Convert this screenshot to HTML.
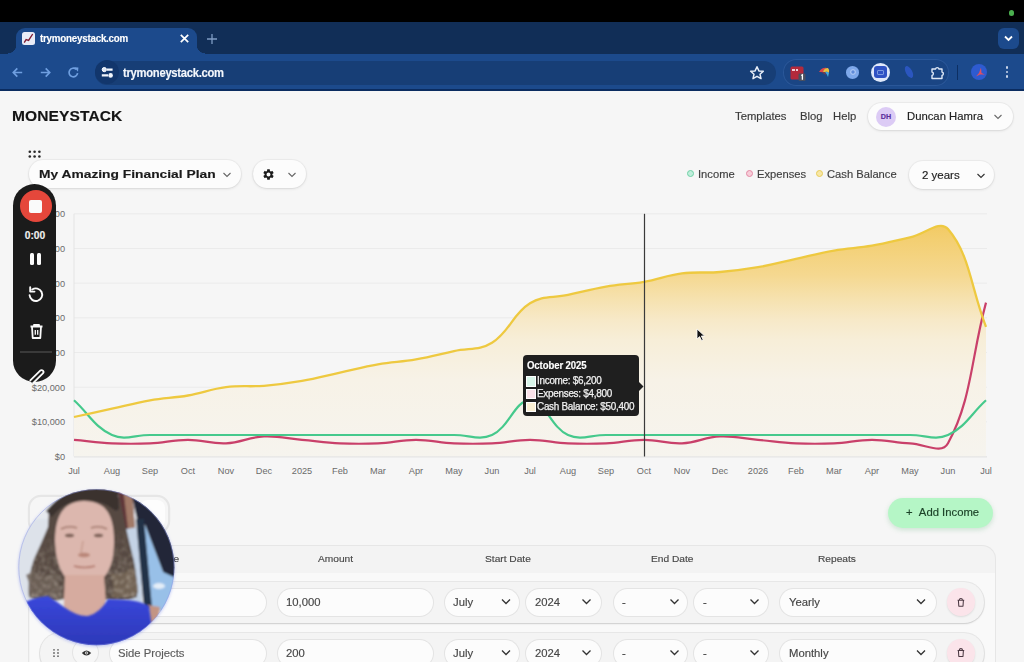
<!DOCTYPE html>
<html><head><meta charset="utf-8">
<style>
*{margin:0;padding:0;box-sizing:border-box}
html,body{width:1024px;height:662px;overflow:hidden;background:#000;font-family:"Liberation Sans",sans-serif}
.a{position:absolute}
.t{position:absolute;white-space:nowrap;line-height:1;-webkit-text-stroke:0.15px currentColor}
.pill{position:absolute;background:#fcfcfc;border-radius:15px;box-shadow:0 1px 3px rgba(0,0,0,.10),0 0 0 1px rgba(0,0,0,.035)}
</style></head><body>
<!-- browser chrome -->
<div class="a" style="left:0;top:22px;width:1024px;height:32px;background:#112e57"></div>
<div class="a" style="left:1011.7px;top:13px;width:0;height:0"></div>
<div class="a" style="left:1009px;top:10.3px;width:5.4px;height:5.4px;border-radius:50%;background:#4bb04f"></div>
<!-- active tab -->
<div class="a" style="left:16px;top:28px;width:181px;height:26px;background:#1c4a8c;border-radius:9px 9px 0 0"></div>
<div class="a" style="left:8px;top:45px;width:8px;height:9px;background:radial-gradient(circle at 0 0,#112e57 8px,#1c4a8c 8.5px)"></div>
<div class="a" style="left:197px;top:45px;width:8px;height:9px;background:radial-gradient(circle at 100% 0,#112e57 8px,#1c4a8c 8.5px)"></div>
<div class="a" style="left:22px;top:32px;width:12.7px;height:13px;border-radius:2.5px;background:#e9ecf7"></div>
<svg class="a" style="left:22px;top:32px" width="13" height="13"><polyline points="2.2,10.6 4.1,7.6 6.6,8.4 10.7,2" fill="none" stroke="#7e1a32" stroke-width="1.35"/></svg>
<div class="t" style="left:40.3px;top:33px;font-size:11.2px;font-weight:bold;color:#fff;letter-spacing:-0.25px;transform:scaleX(0.873);transform-origin:0 0">trymoneystack.com</div>
<svg class="a" style="left:179px;top:33px" width="11" height="11"><path d="M1.8 1.8L9.2 9.2M9.2 1.8L1.8 9.2" stroke="#fff" stroke-width="1.7"/></svg>
<svg class="a" style="left:206px;top:32.5px" width="12" height="12"><path d="M6 1V11M1 6H11" stroke="#7f9cc4" stroke-width="1.3"/></svg>
<div class="a" style="left:998px;top:28px;width:21px;height:21px;border-radius:6px;background:#1c4a8c"></div>
<svg class="a" style="left:1003px;top:34px" width="11" height="9"><path d="M2 2.5L5.5 6L9 2.5" fill="none" stroke="#fff" stroke-width="1.8"/></svg>
<!-- toolbar -->
<div class="a" style="left:0;top:54px;width:1024px;height:35px;background:#1c4a8c"></div>
<div class="a" style="left:0;top:89px;width:1024px;height:1.5px;background:#0b2c60"></div>
<svg class="a" style="left:11.1px;top:65.5px" width="13" height="13"><path d="M11.2 6.5H2.3M6.3 2.4L2.3 6.5L6.3 10.6" fill="none" stroke="#6f9fe0" stroke-width="1.7"/></svg>
<svg class="a" style="left:38.7px;top:65.5px" width="13" height="13"><path d="M1.8 6.5H10.7M6.7 2.4L10.7 6.5L6.7 10.6" fill="none" stroke="#6f9fe0" stroke-width="1.7"/></svg>
<svg class="a" style="left:67.3px;top:65.5px" width="13" height="13"><path d="M10.6 7.2A4.3 4.3 0 1 1 9.2 3.3" fill="none" stroke="#6f9fe0" stroke-width="1.7"/><path d="M7.2 1.2L11.4 1.6L11 5.8Z" fill="#6f9fe0"/></svg>
<div class="a" style="left:95px;top:60.5px;width:681px;height:24px;border-radius:12px;background:#173e76"></div>
<div class="a" style="left:94.6px;top:60.4px;width:24px;height:24px;border-radius:50%;background:#12366c"></div>
<svg class="a" style="left:99.5px;top:65px" width="15" height="15"><circle cx="4.3" cy="4.6" r="2.1" fill="#dfe8f6" stroke="#fff" stroke-width="1"/><path d="M6.8 4.6H12.6M1.8 10.4H8" stroke="#f2f6fc" stroke-width="2.1"/><circle cx="10.6" cy="10.4" r="2.3" fill="#f2f6fc"/></svg>
<div class="t" style="left:123px;top:66.5px;font-size:12.4px;font-weight:bold;color:#f4f7fc;letter-spacing:-0.3px;transform:scaleX(0.906);transform-origin:0 0">trymoneystack.com</div>
<svg class="a" style="left:749px;top:64.5px" width="16" height="16"><path d="M8 1.8L9.9 5.9L14.3 6.3L11 9.2L12 13.6L8 11.3L4 13.6L5 9.2L1.7 6.3L6.1 5.9Z" fill="none" stroke="#e8eef8" stroke-width="1.5" stroke-linejoin="round"/></svg>
<div class="a" style="left:783px;top:59.4px;width:166.4px;height:26.3px;border-radius:13px;background:#1a4584;box-shadow:inset 0 0 0 1px #2a5799"></div>
<svg class="a" style="left:789px;top:65px" width="18" height="17"><rect x="1.5" y="1.5" width="13" height="13" rx="1.5" fill="#b32a3c"/><rect x="3" y="4" width="3" height="2" fill="#f0d0d8"/><rect x="7" y="4" width="2" height="2" fill="#f0d0d8"/><rect x="9.5" y="8.5" width="7" height="7.5" rx="1.2" fill="#4a5060"/><path d="M12.2 10.5L13.4 9.8V14.8" stroke="#fff" stroke-width="1.3" fill="none"/></svg>
<svg class="a" style="left:818px;top:66px" width="14" height="12"><path d="M1 6Q4 1 9 2Q6 3 5 6Z" fill="#e04848"/><path d="M5 6Q6 2 10 2Q12 4 11 7Q9 5 7 6Z" fill="#e8c040"/><path d="M7 6Q9 5 11 7L10 11Q9 8 7 6Z" fill="#40a8e0"/><path d="M3 6L7 6L8 9Z" fill="#a03838" opacity="0.7"/></svg>
<div class="a" style="left:846px;top:66px;width:13px;height:12.5px;border-radius:50%;background:#7ea8ea"></div>
<div class="a" style="left:849.5px;top:69.3px;width:6px;height:6px;border-radius:50%;background:#5f8ad8;box-shadow:inset 0 0 0 1.3px #a8c4f2"></div>
<div class="a" style="left:870.8px;top:62.6px;width:19.4px;height:19.4px;border-radius:50%;background:#dfe8fa"></div>
<div class="a" style="left:874.3px;top:66.1px;width:12.4px;height:12.4px;border-radius:3px;background:#2f52c4"></div>
<div class="a" style="left:877px;top:69.8px;width:7px;height:5px;border-radius:1px;border:1px solid #7a98e0"></div>
<svg class="a" style="left:902px;top:64px" width="14" height="16"><ellipse cx="7" cy="8" rx="3.2" ry="6.5" transform="rotate(-28 7 8)" fill="#2b56bf"/></svg>
<svg class="a" style="left:929px;top:64.5px" width="16" height="16"><path d="M3 4H6.5A1.8 1.8 0 0 1 10 4H13V7A1.8 1.8 0 0 1 13 10.5V13.5H3V10.5A1.8 1.8 0 0 0 3 7Z" fill="none" stroke="#dfe8f6" stroke-width="1.4" stroke-linejoin="round"/></svg>
<div class="a" style="left:957px;top:65px;width:1.3px;height:15px;background:#0d2f63"></div>
<div class="a" style="left:971px;top:64.3px;width:16px;height:16px;border-radius:50%;background:#2e5bd0"></div>
<svg class="a" style="left:971px;top:64.3px" width="16" height="16"><path d="M10 3.5L10.5 9L14 10.5L9 10.5L5 12.5L8 9Z" fill="#e05060"/></svg>
<div class="a" style="left:1005.7px;top:66.3px;width:2.6px;height:2.6px;border-radius:50%;background:#c9d6ea"></div>
<div class="a" style="left:1005.7px;top:70.7px;width:2.6px;height:2.6px;border-radius:50%;background:#c9d6ea"></div>
<div class="a" style="left:1005.7px;top:75.1px;width:2.6px;height:2.6px;border-radius:50%;background:#c9d6ea"></div>

<!-- page -->
<div class="a" style="left:0;top:90.5px;width:1024px;height:572px;background:#f6f6f6;overflow:hidden">
</div>
<div class="t" style="left:11.6px;top:108.3px;font-size:15.2px;font-weight:bold;color:#141414;letter-spacing:0.1px;transform:scaleX(1.023);transform-origin:0 0">MONEYSTACK</div>
<div class="t" style="left:735.4px;top:111.56px;font-size:10.4px;color:#3a3a3a;transform:scaleX(1.087);transform-origin:0 0">Templates</div>
<div class="t" style="left:799.6px;top:111.56px;font-size:10.4px;color:#3a3a3a;transform:scaleX(1.087);transform-origin:0 0">Blog</div>
<div class="t" style="left:832.8px;top:111.56px;font-size:10.4px;color:#3a3a3a;transform:scaleX(1.087);transform-origin:0 0">Help</div>
<div class="pill" style="left:867.6px;top:102.5px;width:145.7px;height:27.5px;border-radius:14px"></div>
<div class="a" style="left:876px;top:106.5px;width:20px;height:20px;border-radius:50%;background:#dccbf5"></div>
<div class="t" style="left:876px;top:113px;width:20px;text-align:center;font-size:7.2px;font-weight:bold;color:#5a2d9c">DH</div>
<div class="t" style="left:906.5px;top:111.65px;font-size:10.3px;color:#222;transform:scaleX(1.097);transform-origin:0 0">Duncan Hamra</div>
<svg class="a" style="left:993px;top:112.5px" width="10" height="8"><path d="M1.5 2L5 5.5L8.5 2" fill="none" stroke="#6a6a6a" stroke-width="1.1"/></svg>

<svg class="a" style="left:28px;top:150px" width="14" height="9"><g fill="#2a2a2a"><circle cx="1.8" cy="1.8" r="1.3"/><circle cx="6.6" cy="1.8" r="1.3"/><circle cx="11.4" cy="1.8" r="1.3"/><circle cx="1.8" cy="6.5" r="1.3"/><circle cx="6.6" cy="6.5" r="1.3"/><circle cx="11.4" cy="6.5" r="1.3"/></g></svg>
<div class="pill" style="left:29.4px;top:160px;width:211.8px;height:27.5px;border-radius:14px"></div>
<div class="t" style="left:39px;top:168.16px;font-size:11.6px;font-weight:bold;color:#1b1b1b;transform:scaleX(1.190);transform-origin:0 0">My Amazing Financial Plan</div>
<svg class="a" style="left:222px;top:170.5px" width="10" height="8"><path d="M1.5 2L5 5.5L8.5 2" fill="none" stroke="#666" stroke-width="1.1"/></svg>
<div class="pill" style="left:252.9px;top:160px;width:52.8px;height:27.5px;border-radius:14px"></div>
<svg class="a" style="left:262px;top:167.5px" width="13" height="13" viewBox="0 0 24 24"><path fill="#1b1b1b" d="M19.14 12.94c.04-.3.06-.61.06-.94 0-.32-.02-.64-.07-.94l2.03-1.58a.49.49 0 0 0 .12-.61l-1.92-3.32a.488.488 0 0 0-.59-.22l-2.39.96c-.5-.38-1.03-.7-1.62-.94l-.36-2.54a.484.484 0 0 0-.48-.41h-3.84c-.24 0-.43.17-.47.41l-.36 2.54c-.59.24-1.13.57-1.62.94l-2.39-.96c-.22-.08-.47 0-.59.22L2.74 8.87c-.12.21-.08.47.12.61l2.03 1.58c-.05.3-.09.63-.09.94s.02.64.07.94l-2.03 1.58a.49.49 0 0 0-.12.61l1.92 3.32c.12.22.37.29.59.22l2.39-.96c.5.38 1.03.7 1.62.94l.36 2.54c.05.24.24.41.48.41h3.84c.24 0 .44-.17.47-.41l.36-2.54c.59-.24 1.13-.56 1.62-.94l2.39.96c.22.08.47 0 .59-.22l1.92-3.32c.12-.22.07-.47-.12-.61l-2.01-1.58zM12 15.6c-1.98 0-3.6-1.62-3.6-3.6s1.62-3.6 3.6-3.6 3.6 1.62 3.6 3.6-1.62 3.6-3.6 3.6z"/></svg>
<svg class="a" style="left:286.7px;top:170.5px" width="10" height="8"><path d="M1.5 2L5 5.5L8.5 2" fill="none" stroke="#666" stroke-width="1.1"/></svg>

<div class="a" style="left:687px;top:170.2px;width:7px;height:7px;border-radius:50%;background:#bfeedb;border:1.2px solid #6fd0a5"></div>
<div class="t" style="left:698.4px;top:169.95px;font-size:10.2px;color:#3f3f3f;transform:scaleX(1.098);transform-origin:0 0">Income</div>
<div class="a" style="left:745.5px;top:170.2px;width:7px;height:7px;border-radius:50%;background:#f7cdd8;border:1.2px solid #e48aa5"></div>
<div class="t" style="left:756.7px;top:169.95px;font-size:10.2px;color:#3f3f3f;transform:scaleX(1.098);transform-origin:0 0">Expenses</div>
<div class="a" style="left:815.5px;top:170.2px;width:7px;height:7px;border-radius:50%;background:#f8e7a6;border:1.2px solid #e8cc5a"></div>
<div class="t" style="left:826.6px;top:169.95px;font-size:10.2px;color:#3f3f3f;transform:scaleX(1.098);transform-origin:0 0">Cash Balance</div>
<div class="pill" style="left:908.8px;top:161.2px;width:85.4px;height:27.5px;border-radius:14px"></div>
<div class="t" style="left:922.3px;top:171.39px;font-size:10.1px;color:#222;transform:scaleX(1.139);transform-origin:0 0">2 years</div>
<svg class="a" style="left:975.8px;top:171.6px" width="10" height="8"><path d="M1.5 2L5 5.5L8.5 2" fill="none" stroke="#333" stroke-width="1.15"/></svg>

<svg width="1024" height="662" style="position:absolute;left:0;top:0">
<defs><linearGradient id="cg" x1="0" y1="213.8" x2="0" y2="456.5" gradientUnits="userSpaceOnUse"><stop offset="0" stop-color="#f2c658"/><stop offset="0.108" stop-color="#f3cf72"/><stop offset="0.252" stop-color="#f5d890"/><stop offset="0.355" stop-color="#f6e2b0"/><stop offset="0.437" stop-color="#f7e9c8"/><stop offset="0.52" stop-color="#f7eed8"/><stop offset="0.684" stop-color="#f7f2e7"/><stop offset="1" stop-color="#f6f4ee"/></linearGradient></defs>
<line x1="74" x2="987" y1="213.8" y2="213.8" stroke="#ebebeb" stroke-width="1"/>
<line x1="74" x2="987" y1="248.5" y2="248.5" stroke="#ebebeb" stroke-width="1"/>
<line x1="74" x2="987" y1="283.1" y2="283.1" stroke="#ebebeb" stroke-width="1"/>
<line x1="74" x2="987" y1="317.8" y2="317.8" stroke="#ebebeb" stroke-width="1"/>
<line x1="74" x2="987" y1="352.5" y2="352.5" stroke="#ebebeb" stroke-width="1"/>
<line x1="74" x2="987" y1="387.2" y2="387.2" stroke="#ebebeb" stroke-width="1"/>
<line x1="74" x2="987" y1="421.8" y2="421.8" stroke="#ebebeb" stroke-width="1"/>
<line x1="74" x2="987" y1="456.5" y2="456.5" stroke="#ebebeb" stroke-width="1"/>
<line x1="74" x2="74" y1="213.8" y2="456.5" stroke="#e4e4e4" stroke-width="1"/>
<path d="M74.0 417.0 C89.2 413.6 96.8 412.0 112.0 408.7 C127.2 405.3 134.7 403.0 150.0 400.3 C165.1 397.7 172.9 398.1 188.0 395.5 C203.3 392.8 210.6 389.1 226.0 387.2 C241.0 385.2 248.9 387.0 264.0 385.8 C279.3 384.5 286.9 383.5 302.0 380.9 C317.3 378.3 324.8 375.9 340.0 372.6 C355.2 369.3 362.7 366.9 378.0 364.3 C393.1 361.7 400.9 362.0 416.0 359.4 C431.3 356.8 438.8 354.4 454.0 351.1 C469.2 347.8 479.4 350.7 492.0 342.8 C509.8 331.6 512.2 314.4 530.0 303.3 C542.6 295.3 552.8 298.3 568.0 294.9 C583.2 291.6 590.7 289.3 606.0 286.6 C621.1 284.0 628.9 284.4 644.0 281.8 C659.3 279.1 666.6 275.4 682.0 273.4 C697.0 271.5 704.9 273.3 720.0 272.0 C735.3 270.8 742.9 269.8 758.0 267.2 C773.3 264.5 780.8 262.2 796.0 258.9 C811.2 255.5 818.7 253.2 834.0 250.6 C849.1 247.9 856.9 248.3 872.0 245.7 C887.3 243.0 894.8 240.7 910.0 237.4 C925.2 234.0 939.8 219.4 948.0 229.1 C970.2 255.2 970.8 287.7 986.0 326.8 L986 456.5 L74 456.5 Z" fill="url(#cg)"/>
<path d="M74.0 439.9 C89.2 441.2 96.8 442.6 112.0 443.3 C127.2 444.0 134.8 444.0 150.0 443.3 C165.2 442.6 172.8 439.9 188.0 439.9 C203.2 439.9 210.9 444.0 226.0 443.3 C241.3 442.6 248.7 437.1 264.0 436.4 C279.1 435.7 286.8 438.5 302.0 439.9 C317.2 441.2 324.8 442.6 340.0 443.3 C355.2 444.0 362.8 444.0 378.0 443.3 C393.2 442.6 400.8 439.9 416.0 439.9 C431.2 439.9 438.8 442.6 454.0 443.3 C469.2 444.0 476.8 444.0 492.0 443.3 C507.2 442.6 514.8 439.9 530.0 439.9 C545.2 439.9 552.8 442.6 568.0 443.3 C583.2 444.0 590.8 444.0 606.0 443.3 C621.2 442.6 628.8 439.9 644.0 439.9 C659.2 439.9 666.9 444.0 682.0 443.3 C697.3 442.6 704.7 437.1 720.0 436.4 C735.1 435.7 742.8 438.5 758.0 439.9 C773.2 441.2 780.8 442.6 796.0 443.3 C811.2 444.0 818.8 444.0 834.0 443.3 C849.2 442.6 856.8 439.9 872.0 439.9 C887.2 439.9 894.8 442.6 910.0 443.3 C925.2 444.0 941.7 455.0 948.0 443.3 C972.1 398.7 970.8 358.9 986.0 302.6" fill="none" stroke="#c9406a" stroke-width="2.2"/>
<path d="M74.0 400.3 C89.2 414.2 94.5 427.0 112.0 435.0 C124.9 440.9 134.8 435.0 150.0 435.0 C165.2 435.0 172.8 435.0 188.0 435.0 C203.2 435.0 210.8 435.0 226.0 435.0 C241.2 435.0 248.8 435.0 264.0 435.0 C279.2 435.0 286.8 435.0 302.0 435.0 C317.2 435.0 324.8 435.0 340.0 435.0 C355.2 435.0 362.8 435.0 378.0 435.0 C393.2 435.0 400.8 435.0 416.0 435.0 C431.2 435.0 438.8 435.0 454.0 435.0 C469.2 435.0 479.1 440.9 492.0 435.0 C509.5 427.0 514.8 400.3 530.0 400.3 C545.2 400.3 550.5 427.0 568.0 435.0 C580.9 440.9 590.8 435.0 606.0 435.0 C621.2 435.0 628.8 435.0 644.0 435.0 C659.2 435.0 666.8 435.0 682.0 435.0 C697.2 435.0 704.8 435.0 720.0 435.0 C735.2 435.0 742.8 435.0 758.0 435.0 C773.2 435.0 780.8 435.0 796.0 435.0 C811.2 435.0 818.8 435.0 834.0 435.0 C849.2 435.0 856.8 435.0 872.0 435.0 C887.2 435.0 894.8 435.0 910.0 435.0 C925.2 435.0 935.1 440.9 948.0 435.0 C965.5 427.0 970.8 414.2 986.0 400.3" fill="none" stroke="#45c98c" stroke-width="2.2"/>
<path d="M74.0 417.0 C89.2 413.6 96.8 412.0 112.0 408.7 C127.2 405.3 134.7 403.0 150.0 400.3 C165.1 397.7 172.9 398.1 188.0 395.5 C203.3 392.8 210.6 389.1 226.0 387.2 C241.0 385.2 248.9 387.0 264.0 385.8 C279.3 384.5 286.9 383.5 302.0 380.9 C317.3 378.3 324.8 375.9 340.0 372.6 C355.2 369.3 362.7 366.9 378.0 364.3 C393.1 361.7 400.9 362.0 416.0 359.4 C431.3 356.8 438.8 354.4 454.0 351.1 C469.2 347.8 479.4 350.7 492.0 342.8 C509.8 331.6 512.2 314.4 530.0 303.3 C542.6 295.3 552.8 298.3 568.0 294.9 C583.2 291.6 590.7 289.3 606.0 286.6 C621.1 284.0 628.9 284.4 644.0 281.8 C659.3 279.1 666.6 275.4 682.0 273.4 C697.0 271.5 704.9 273.3 720.0 272.0 C735.3 270.8 742.9 269.8 758.0 267.2 C773.3 264.5 780.8 262.2 796.0 258.9 C811.2 255.5 818.7 253.2 834.0 250.6 C849.1 247.9 856.9 248.3 872.0 245.7 C887.3 243.0 894.8 240.7 910.0 237.4 C925.2 234.0 939.8 219.4 948.0 229.1 C970.2 255.2 970.8 287.7 986.0 326.8" fill="none" stroke="#eec940" stroke-width="2.3"/>
<line x1="74" x2="987" y1="457" y2="457" stroke="#e3e3e3" stroke-width="1"/>
<line x1="644.5" x2="644.5" y1="213.8" y2="456.5" stroke="#3a3a3a" stroke-width="1.2"/>
<text x="65" y="217.2" text-anchor="end" font-size="9.2" fill="#6b6b6b" font-family="Liberation Sans, sans-serif">$70,000</text>
<text x="65" y="251.9" text-anchor="end" font-size="9.2" fill="#6b6b6b" font-family="Liberation Sans, sans-serif">$60,000</text>
<text x="65" y="286.5" text-anchor="end" font-size="9.2" fill="#6b6b6b" font-family="Liberation Sans, sans-serif">$50,000</text>
<text x="65" y="321.2" text-anchor="end" font-size="9.2" fill="#6b6b6b" font-family="Liberation Sans, sans-serif">$40,000</text>
<text x="65" y="355.9" text-anchor="end" font-size="9.2" fill="#6b6b6b" font-family="Liberation Sans, sans-serif">$30,000</text>
<text x="65" y="390.6" text-anchor="end" font-size="9.2" fill="#6b6b6b" font-family="Liberation Sans, sans-serif">$20,000</text>
<text x="65" y="425.2" text-anchor="end" font-size="9.2" fill="#6b6b6b" font-family="Liberation Sans, sans-serif">$10,000</text>
<text x="65" y="459.9" text-anchor="end" font-size="9.2" fill="#6b6b6b" font-family="Liberation Sans, sans-serif">$0</text>
<text x="74" y="474" text-anchor="middle" font-size="9.2" fill="#6b6b6b" font-family="Liberation Sans, sans-serif">Jul</text>
<text x="112" y="474" text-anchor="middle" font-size="9.2" fill="#6b6b6b" font-family="Liberation Sans, sans-serif">Aug</text>
<text x="150" y="474" text-anchor="middle" font-size="9.2" fill="#6b6b6b" font-family="Liberation Sans, sans-serif">Sep</text>
<text x="188" y="474" text-anchor="middle" font-size="9.2" fill="#6b6b6b" font-family="Liberation Sans, sans-serif">Oct</text>
<text x="226" y="474" text-anchor="middle" font-size="9.2" fill="#6b6b6b" font-family="Liberation Sans, sans-serif">Nov</text>
<text x="264" y="474" text-anchor="middle" font-size="9.2" fill="#6b6b6b" font-family="Liberation Sans, sans-serif">Dec</text>
<text x="302" y="474" text-anchor="middle" font-size="9.2" fill="#6b6b6b" font-family="Liberation Sans, sans-serif">2025</text>
<text x="340" y="474" text-anchor="middle" font-size="9.2" fill="#6b6b6b" font-family="Liberation Sans, sans-serif">Feb</text>
<text x="378" y="474" text-anchor="middle" font-size="9.2" fill="#6b6b6b" font-family="Liberation Sans, sans-serif">Mar</text>
<text x="416" y="474" text-anchor="middle" font-size="9.2" fill="#6b6b6b" font-family="Liberation Sans, sans-serif">Apr</text>
<text x="454" y="474" text-anchor="middle" font-size="9.2" fill="#6b6b6b" font-family="Liberation Sans, sans-serif">May</text>
<text x="492" y="474" text-anchor="middle" font-size="9.2" fill="#6b6b6b" font-family="Liberation Sans, sans-serif">Jun</text>
<text x="530" y="474" text-anchor="middle" font-size="9.2" fill="#6b6b6b" font-family="Liberation Sans, sans-serif">Jul</text>
<text x="568" y="474" text-anchor="middle" font-size="9.2" fill="#6b6b6b" font-family="Liberation Sans, sans-serif">Aug</text>
<text x="606" y="474" text-anchor="middle" font-size="9.2" fill="#6b6b6b" font-family="Liberation Sans, sans-serif">Sep</text>
<text x="644" y="474" text-anchor="middle" font-size="9.2" fill="#6b6b6b" font-family="Liberation Sans, sans-serif">Oct</text>
<text x="682" y="474" text-anchor="middle" font-size="9.2" fill="#6b6b6b" font-family="Liberation Sans, sans-serif">Nov</text>
<text x="720" y="474" text-anchor="middle" font-size="9.2" fill="#6b6b6b" font-family="Liberation Sans, sans-serif">Dec</text>
<text x="758" y="474" text-anchor="middle" font-size="9.2" fill="#6b6b6b" font-family="Liberation Sans, sans-serif">2026</text>
<text x="796" y="474" text-anchor="middle" font-size="9.2" fill="#6b6b6b" font-family="Liberation Sans, sans-serif">Feb</text>
<text x="834" y="474" text-anchor="middle" font-size="9.2" fill="#6b6b6b" font-family="Liberation Sans, sans-serif">Mar</text>
<text x="872" y="474" text-anchor="middle" font-size="9.2" fill="#6b6b6b" font-family="Liberation Sans, sans-serif">Apr</text>
<text x="910" y="474" text-anchor="middle" font-size="9.2" fill="#6b6b6b" font-family="Liberation Sans, sans-serif">May</text>
<text x="948" y="474" text-anchor="middle" font-size="9.2" fill="#6b6b6b" font-family="Liberation Sans, sans-serif">Jun</text>
<text x="986" y="474" text-anchor="middle" font-size="9.2" fill="#6b6b6b" font-family="Liberation Sans, sans-serif">Jul</text>
</svg>

<!-- tooltip -->
<div class="a" style="left:522.5px;top:355.2px;width:116.2px;height:60.4px;border-radius:4px;background:#1f1f1f"></div>
<svg class="a" style="left:638px;top:380.5px" width="6" height="11"><path d="M0.5 0.5L5.5 5.5L0.5 10.5Z" fill="#1f1f1f"/></svg>
<div class="t" style="left:526.6px;top:360.5px;font-size:10.2px;font-weight:bold;color:#fff;letter-spacing:-0.1px;transform:scaleX(0.94);transform-origin:0 0">October 2025</div>
<div class="a" style="left:526px;top:376.2px;width:10px;height:10.4px;background:#d9f6ea;border:1px solid #fff"></div>
<div class="a" style="left:526px;top:389px;width:10px;height:10px;background:#fbe3ea;border:1px solid #fff"></div>
<div class="a" style="left:526px;top:401.5px;width:10px;height:10px;background:#fbf0d4;border:1px solid #fff"></div>
<div class="t" style="left:537px;top:376.3px;font-size:10.4px;color:#f2f2f2;letter-spacing:-0.3px;-webkit-text-stroke:0.25px #f2f2f2;transform:scaleX(0.955);transform-origin:0 0">Income: $6,200</div>
<div class="t" style="left:537px;top:389.3px;font-size:10.4px;color:#f2f2f2;letter-spacing:-0.3px;-webkit-text-stroke:0.25px #f2f2f2;transform:scaleX(0.955);transform-origin:0 0">Expenses: $4,800</div>
<div class="t" style="left:537px;top:402.3px;font-size:10.4px;color:#f2f2f2;letter-spacing:-0.3px;-webkit-text-stroke:0.25px #f2f2f2;transform:scaleX(0.955);transform-origin:0 0">Cash Balance: $50,400</div>
<!-- cursor -->
<svg class="a" style="left:696px;top:328px" width="10" height="14"><path d="M1 1L1 11L3.6 8.6L5.6 12.6L7.2 11.8L5.3 8L8.6 8Z" fill="#111" stroke="#fff" stroke-width="0.8"/></svg>

<!-- add income -->
<div class="a" style="left:887.8px;top:498.3px;width:105.6px;height:29.8px;border-radius:15px;background:#b5f6c6;box-shadow:0 2px 5px rgba(60,160,90,.22)"></div>
<div class="t" style="left:905.5px;top:508.26px;font-size:10.4px;color:#1c4228;transform:scaleX(1.087);transform-origin:0 0">+&nbsp;&nbsp;Add Income</div>

<!-- segmented behind webcam -->
<div class="a" style="left:30px;top:496.5px;width:137.5px;height:35px;border-radius:11px;background:#f6f6f6;box-shadow:0 0 0 2.2px #e6e6e6"></div>
<div class="a" style="left:140px;top:500px;width:25px;height:28px;border-radius:8px;background:#fdfdfd"></div>

<!-- table card -->
<div class="a" style="left:29.2px;top:546px;width:966.2px;height:130px;border-radius:13px;background:#f3f3f3;box-shadow:0 0 0 1px #e6e6e6"></div>
<div class="a" style="left:30px;top:573px;width:964.6px;height:100px;background:#f9f9f9"></div>
<div class="t" style="left:152px;top:553.51px;font-size:9.6px;color:#474747;transform:scaleX(1.062);transform-origin:0 0">Name</div>
<div class="t" style="left:318px;top:553.51px;font-size:9.6px;color:#474747;transform:scaleX(1.062);transform-origin:0 0">Amount</div>
<div class="t" style="left:484.5px;top:553.51px;font-size:9.6px;color:#474747;transform:scaleX(1.062);transform-origin:0 0">Start Date</div>
<div class="t" style="left:650.5px;top:553.51px;font-size:9.6px;color:#474747;transform:scaleX(1.062);transform-origin:0 0">End Date</div>
<div class="t" style="left:817.5px;top:553.51px;font-size:9.6px;color:#474747;transform:scaleX(1.062);transform-origin:0 0">Repeats</div>

<!-- row 1 -->
<div class="a" style="left:40px;top:582px;width:944.3px;height:41.3px;border-radius:20px;background:#f4f4f4;box-shadow:0 1px 2px rgba(0,0,0,.12),0 0 0 1px #e8e8e8"></div>
<div class="pill" style="left:110px;top:588.5px;width:155.6px;height:27.8px;box-shadow:0 0 0 1px #e4e4e4"></div>
<div class="pill" style="left:277.7px;top:588.5px;width:155.4px;height:27.8px;box-shadow:0 0 0 1px #e4e4e4"></div>
<div class="t" style="left:285.8px;top:597.93px;font-size:10.2px;color:#464646;transform:scaleX(1.108);transform-origin:0 0">10,000</div>
<div class="pill" style="left:445.3px;top:588.5px;width:74.1px;height:27.8px;box-shadow:0 0 0 1px #e4e4e4"></div>
<div class="t" style="left:453px;top:597.93px;font-size:10.2px;color:#464646;transform:scaleX(1.108);transform-origin:0 0">July</div>
<div class="pill" style="left:526px;top:588.5px;width:75.1px;height:27.8px;box-shadow:0 0 0 1px #e4e4e4"></div>
<div class="t" style="left:535px;top:597.93px;font-size:10.2px;color:#464646;transform:scaleX(1.108);transform-origin:0 0">2024</div>
<div class="pill" style="left:613.7px;top:588.5px;width:73.3px;height:27.8px;box-shadow:0 0 0 1px #e4e4e4"></div>
<div class="t" style="left:621.5px;top:597.93px;font-size:10.2px;color:#464646;transform:scaleX(1.108);transform-origin:0 0">-</div>
<div class="pill" style="left:694.4px;top:588.5px;width:73.3px;height:27.8px;box-shadow:0 0 0 1px #e4e4e4"></div>
<div class="t" style="left:702.5px;top:597.93px;font-size:10.2px;color:#464646;transform:scaleX(1.108);transform-origin:0 0">-</div>
<div class="pill" style="left:780px;top:588.5px;width:156.2px;height:27.8px;box-shadow:0 0 0 1px #e4e4e4"></div>
<div class="t" style="left:789px;top:597.93px;font-size:10.2px;color:#464646;transform:scaleX(1.108);transform-origin:0 0">Yearly</div>
<div class="a" style="left:947px;top:588.4px;width:27.7px;height:27.7px;border-radius:50%;background:#fbe4ea;box-shadow:0 1px 2px rgba(0,0,0,.10)"></div>
<!-- row 2 -->
<div class="a" style="left:40px;top:633px;width:944.3px;height:41.3px;border-radius:20px;background:#f4f4f4;box-shadow:0 1px 2px rgba(0,0,0,.12),0 0 0 1px #e8e8e8"></div>
<svg class="a" style="left:52px;top:648px" width="9" height="10"><g fill="#666"><circle cx="2" cy="1.8" r="0.9"/><circle cx="6" cy="1.8" r="0.9"/><circle cx="2" cy="5" r="0.9"/><circle cx="6" cy="5" r="0.9"/><circle cx="2" cy="8.2" r="0.9"/><circle cx="6" cy="8.2" r="0.9"/></g></svg>
<div class="a" style="left:73px;top:640px;width:25px;height:25px;border-radius:50%;background:#f7f7f7;box-shadow:0 0 0 1px #e4e4e4"></div>
<svg class="a" style="left:80.5px;top:648.5px" width="11" height="8"><path d="M0.8 4Q5.5 -1.2 10.2 4Q5.5 9.2 0.8 4Z" fill="#333"/><circle cx="5.5" cy="4" r="1.4" fill="#f7f7f7"/><circle cx="5.5" cy="4" r="0.7" fill="#333"/></svg>
<div class="pill" style="left:110px;top:639.5px;width:155.6px;height:27.8px;box-shadow:0 0 0 1px #e4e4e4"></div>
<div class="t" style="left:118px;top:648.93px;font-size:10.2px;color:#5c5c5c;transform:scaleX(1.108);transform-origin:0 0">Side Projects</div>
<div class="pill" style="left:277.7px;top:639.5px;width:155.4px;height:27.8px;box-shadow:0 0 0 1px #e4e4e4"></div>
<div class="t" style="left:285.8px;top:648.93px;font-size:10.2px;color:#464646;transform:scaleX(1.108);transform-origin:0 0">200</div>
<div class="pill" style="left:445.3px;top:639.5px;width:74.1px;height:27.8px;box-shadow:0 0 0 1px #e4e4e4"></div>
<div class="t" style="left:453px;top:648.93px;font-size:10.2px;color:#464646;transform:scaleX(1.108);transform-origin:0 0">July</div>
<div class="pill" style="left:526px;top:639.5px;width:75.1px;height:27.8px;box-shadow:0 0 0 1px #e4e4e4"></div>
<div class="t" style="left:535px;top:648.93px;font-size:10.2px;color:#464646;transform:scaleX(1.108);transform-origin:0 0">2024</div>
<div class="pill" style="left:613.7px;top:639.5px;width:73.3px;height:27.8px;box-shadow:0 0 0 1px #e4e4e4"></div>
<div class="t" style="left:621.5px;top:648.93px;font-size:10.2px;color:#464646;transform:scaleX(1.108);transform-origin:0 0">-</div>
<div class="pill" style="left:694.4px;top:639.5px;width:73.3px;height:27.8px;box-shadow:0 0 0 1px #e4e4e4"></div>
<div class="t" style="left:702.5px;top:648.93px;font-size:10.2px;color:#464646;transform:scaleX(1.108);transform-origin:0 0">-</div>
<div class="pill" style="left:780px;top:639.5px;width:156.2px;height:27.8px;box-shadow:0 0 0 1px #e4e4e4"></div>
<div class="t" style="left:789px;top:648.93px;font-size:10.2px;color:#464646;transform:scaleX(1.108);transform-origin:0 0">Monthly</div>
<div class="a" style="left:947px;top:639px;width:27.7px;height:27.7px;border-radius:50%;background:#fbe4ea;box-shadow:0 1px 2px rgba(0,0,0,.10)"></div>
<!-- chevrons & trash icons -->
<svg class="a" style="left:0;top:0" width="1024" height="662">
<g fill="none" stroke="#333" stroke-width="1.3">
<path d="M502 599.5L506 603.5L510 599.5"/><path d="M582.5 599.5L586.5 603.5L590.5 599.5"/><path d="M670.5 599.5L674.5 603.5L678.5 599.5"/><path d="M750.5 599.5L754.5 603.5L758.5 599.5"/><path d="M917 599.5L921 603.5L925 599.5"/>
<path d="M502 650.5L506 654.5L510 650.5"/><path d="M582.5 650.5L586.5 654.5L590.5 650.5"/><path d="M670.5 650.5L674.5 654.5L678.5 650.5"/><path d="M750.5 650.5L754.5 654.5L758.5 650.5"/><path d="M917 650.5L921 654.5L925 650.5"/>
</g>
<g fill="none" stroke="#4d3a44" stroke-width="1.05" stroke-linejoin="round">
<path d="M957.6 600.2H964.2M959.2 600.2Q959.4 598.4 960.9 598.4Q962.4 598.4 962.6 600.2M958.4 600.2L958.8 606.3H963L963.4 600.2"/>
<path d="M957.6 650.4H964.2M959.2 650.4Q959.4 648.6 960.9 648.6Q962.4 648.6 962.6 650.4M958.4 650.4L958.8 656.5H963L963.4 650.4"/>
</g>
</svg>

<!-- recording toolbar -->
<div class="a" style="left:13.3px;top:184px;width:43px;height:198px;border-radius:21.5px;background:#1b1b1b"></div>
<div class="a" style="left:19.6px;top:190px;width:32px;height:32px;border-radius:50%;background:#e5473b"></div>
<div class="a" style="left:29px;top:199.6px;width:13px;height:13px;border-radius:2px;background:#fafafa"></div>
<div class="t" style="left:14px;top:231.3px;width:42px;text-align:center;font-size:10.3px;font-weight:bold;color:#f0f0f0">0:00</div>
<div class="a" style="left:30.2px;top:253.4px;width:3.8px;height:11.6px;border-radius:1.5px;background:#fafafa"></div>
<div class="a" style="left:37.2px;top:253.4px;width:3.8px;height:11.6px;border-radius:1.5px;background:#fafafa"></div>
<svg class="a" style="left:27px;top:285px" width="18" height="18"><path d="M5.2 4.6A6.3 6.3 0 1 1 2.6 10.2" fill="none" stroke="#fafafa" stroke-width="1.9" stroke-linecap="round"/><path d="M3.2 2.3V6.6H7.5" fill="none" stroke="#fafafa" stroke-width="1.9" stroke-linecap="round" stroke-linejoin="round"/></svg>
<svg class="a" style="left:28.5px;top:322.5px" width="15" height="17"><path d="M1.5 3.5H13.5M5 3.5V1.8H10V3.5M3 3.5L3.7 15H11.3L12 3.5" fill="none" stroke="#fafafa" stroke-width="1.8" stroke-linejoin="round"/><path d="M6.3 7V11.8M8.7 7V11.8" stroke="#fafafa" stroke-width="1.3"/></svg>
<div class="a" style="left:20px;top:351px;width:31.6px;height:2px;background:#3a3a3a"></div>
<svg class="a" style="left:24px;top:364px" width="24" height="24"><path d="M5.8 16.8L16.2 6.6A1.9 1.9 0 0 1 18.9 9.3L8.6 19.6" fill="#1b1b1b" stroke="#fafafa" stroke-width="1.8"/></svg>

<!-- webcam -->
<svg class="a" style="left:18px;top:488.5px;filter:drop-shadow(0 1px 1.5px rgba(90,110,235,.35))" width="157" height="157" viewBox="0 0 157 157">
<defs><clipPath id="wc"><circle cx="78.4" cy="78.2" r="78"/></clipPath><filter id="bl" x="-10%" y="-10%" width="120%" height="120%"><feGaussianBlur stdDeviation="1.3"/></filter><filter id="bl2"><feGaussianBlur stdDeviation="0.8"/></filter><filter id="curl" x="0" y="0" width="100%" height="100%"><feTurbulence type="fractalNoise" baseFrequency="0.22" numOctaves="2" seed="7" result="n"/><feColorMatrix in="n" type="matrix" values="0 0 0 0 0.52  0 0 0 0 0.46  0 0 0 0 0.40  0 0 0 1.2 -0.5" result="c"/><feComposite in="c" in2="SourceGraphic" operator="in" result="t"/><feGaussianBlur in="t" stdDeviation="0.7"/></filter><linearGradient id="shirt" x1="0" y1="105" x2="0" y2="157" gradientUnits="userSpaceOnUse"><stop offset="0" stop-color="#3a48dc"/><stop offset="1" stop-color="#2d38b8"/></linearGradient><linearGradient id="lg" x1="0" y1="0" x2="0" y2="1"><stop offset="0.25" stop-color="#fff" stop-opacity="0"/><stop offset="0.5" stop-color="#fff" stop-opacity="1"/></linearGradient><mask id="lowm" maskUnits="userSpaceOnUse" x="0" y="0" width="157" height="157"><rect x="0" y="0" width="157" height="157" fill="url(#lg)"/></mask></defs>
<g clip-path="url(#wc)">
<g filter="url(#bl)">
<rect x="-5" y="-5" width="167" height="167" fill="#e6e9ef"/>
<rect x="-5" y="30" width="40" height="80" fill="#dde2ea"/>
<path d="M99 -2L114 0L117 40L106 40Z" fill="#5e3438"/>
<path d="M105 -2L114 0L117 40L110 40Z" fill="#a27a68"/>
<path d="M113 3L160 -5L160 92L146 86L127 36L119 30Z" fill="#232838"/>
<path d="M127 36L145 83L160 90L160 125L133 120L125 40Z" fill="#98c0e8"/>
<path d="M108 40L121 38L124 120L110 118Z" fill="#c4d3e6"/>
<ellipse cx="141" cy="97" rx="6" ry="3" fill="#e4eef8"/>
<path d="M118 30L126 30L134 118L126 121Z" fill="#243046"/>
<path d="M130 116L142 118L140 135L131 134Z" fill="#c39484"/>
<!-- hair -->
<path d="M31 20Q50 2 72 1Q96 1 102 10Q108 40 113 60Q120 85 119 108Q106 114 84 110L46 110Q24 116 11 108Q9 90 16 70Q23 55 30 38Z" fill="#574a42"/>
<path d="M8 86Q14 100 12 108Q28 114 44 110Q40 96 40 84Q28 92 16 82Z" fill="#6e6258" opacity="0.85"/>
<path d="M92 84Q98 98 94 108Q110 110 120 104Q120 90 114 78Q104 88 92 84Z" fill="#756656" opacity="0.85"/>
<path d="M28 22Q48 -2 72 -2L100 -2L101 20L98 22Q84 11 66 11Q46 12 34 28Z" fill="#3a322e"/>
<path d="M31 20Q50 2 72 1Q96 1 102 10Q108 40 113 60Q120 85 119 108Q106 114 84 110L46 110Q24 116 11 108Q9 90 16 70Q23 55 30 38Z" fill="#000" filter="url(#curl)" mask="url(#lowm)"/>
<!-- face -->
<path d="M37 52C37 21 50 12 66 12C84 12 96 21 96 52C96 78 88 95 66 98C46 95 38 78 37 52Z" fill="#dcb7ae"/>
<path d="M47 86L86 86L89 132L45 132Z" fill="#d6ab9f"/>
</g>
<g filter="url(#bl2)">
<path d="M43 40Q51 36 59 39M73 39Q81 36 89 40" stroke="#a47c70" stroke-width="1.5" fill="none"/>
<ellipse cx="51.5" cy="46.5" rx="4.5" ry="1.7" fill="#7d6258"/><ellipse cx="80.5" cy="46.5" rx="4.5" ry="1.7" fill="#7d6258"/>
<path d="M65 52L63 64" stroke="#c49a8c" stroke-width="1.3" fill="none"/>
<ellipse cx="66" cy="66" rx="6" ry="2.2" fill="#b98678"/>
<path d="M56 77Q66 80 77 77" stroke="#b27a6e" stroke-width="1.7" fill="none"/>
</g>
<g filter="url(#bl)">
<path d="M-5 160L2 116Q14 108 30 107Q38 112 46 118Q60 128 70 127Q82 124 90 110Q120 110 131 117L137 160Z" fill="url(#shirt)"/>
</g>
</g>
<circle cx="78.4" cy="78.2" r="77.6" fill="none" stroke="rgba(140,150,230,.45)" stroke-width="1"/>
</svg>
</body></html>
